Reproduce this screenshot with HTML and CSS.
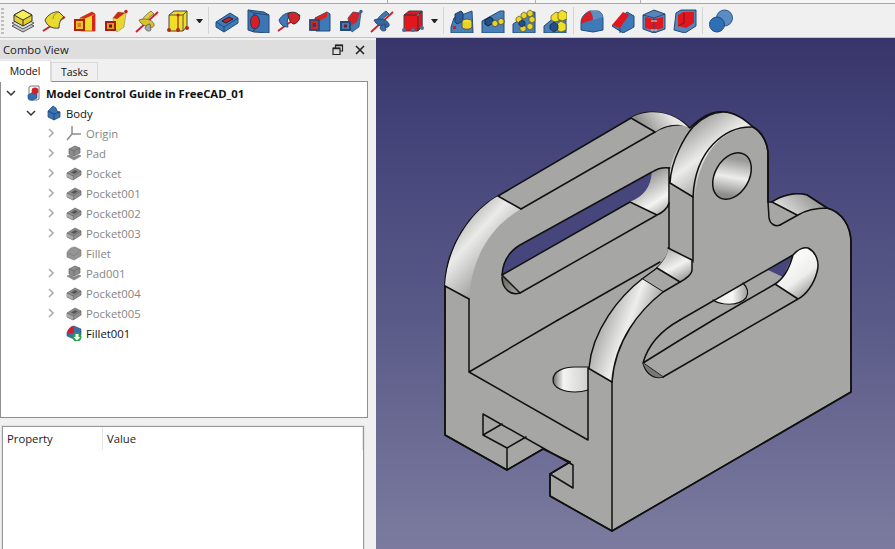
FILE: index.html
```html
<!DOCTYPE html>
<html lang="en">
<head>
<meta charset="utf-8">
<title>FreeCAD</title>
<link rel="stylesheet" href="styles.css">
</head>
<body>
<svg class="defs" width="0" height="0">
  <defs>
    <symbol id="gray-pocket" viewBox="0 0 16 16">
      <path d="M1 8 9 3l6 3v4l-8 5-6-3z" fill="#8e8e8e" stroke="#666" stroke-width=".7"/>
      <path d="M1 8l6 3 8-5" fill="none" stroke="#666" stroke-width=".7"/>
      <path d="M7 11v4" stroke="#666" stroke-width=".7"/>
      <path d="M5 7.500 9 5l3 1.500-4 2.500z" fill="#555"/>
      <path d="M1 8.500l6 3v3.300l-6-3z" fill="#a8a8a8"/>
    </symbol>
    <symbol id="gray-pad" viewBox="0 0 16 16">
      <path d="M3 4 9 1l5 2v5l-6 3-5-2z" fill="#8c8c8c" stroke="#666" stroke-width=".7"/>
      <path d="M3 4l5 2 6-3M8 6v5" fill="none" stroke="#666" stroke-width=".7"/>
      <path d="M1 11l3-1 4 2 5-2 2 1-7 4z" fill="#8a8a8a" stroke="#777" stroke-width=".6"/>
    </symbol>
  </defs>
</svg>

<div class="top-strip">
  <span class="tick tick-a"></span><span class="tick tick-b"></span><span class="tick tick-c"></span>
</div>

<header class="toolbar">
  <span class="grip"></span>
  <span class="tool"><svg viewBox="0 0 24 24"><path d="M1 17l11-6 11 6-11 6z" fill="#c9c9c9" stroke="#555"/><path d="M1 14l11-6 11 6-11 6z" fill="#ddd" stroke="#555"/><path d="M3 6l9-5 9 5v6l-9 5-9-5z" fill="#e2cf2a" stroke="#333"/><path d="M3 6l9 5 9-5-9-5z" fill="#f6ee5a" stroke="#333"/><path d="M12 11v6" stroke="#333"/></svg></span>
  <span class="tool"><svg viewBox="0 0 24 24"><path d="M1 22 23 8" stroke="#c8202a" stroke-width="2"/><path d="M3 11C6 5 13 2 17 3l5 5c-3 1-5 6-5 11-7 1-12-2-14-8z" fill="#e9da2f" stroke="#444"/><path d="M17 3c-4 1-6 4-6 7" fill="none" stroke="#998f10"/></svg></span>
  <span class="tool"><svg viewBox="0 0 24 24"><path d="M7 9 19 3l3 2v17H8z" fill="#f0dc2c" stroke="#a42" stroke-width=".8"/><path d="M7 9 19 3l3 2L11 10z" fill="#d8261e"/><path d="M22 5v17h-3V7z" fill="#d8261e"/><rect x="2" y="11" width="9" height="10" fill="#e8c52a" stroke="#b31d14" stroke-width="2"/><rect x="4.500" y="14" width="3.500" height="4" fill="#e27a1c"/></svg></span>
  <span class="tool"><svg viewBox="0 0 24 24"><path d="M9 9l5-6 8 1-2 14-7 5-3-6z" fill="#e9d52f" stroke="#996" stroke-width=".7"/><path d="M9 9l5-6 7 1-8 6z" fill="#c8281e"/><rect x="2" y="13" width="9" height="8" fill="#d8a020" stroke="#a81a14" stroke-width="2"/><rect x="5" y="15.500" width="3" height="3" fill="#611"/><circle cx="22" cy="2.500" r="1.700" fill="#b52018"/></svg></span>
  <span class="tool"><svg viewBox="0 0 24 24"><path d="M1 23 23 3" stroke="#c8202a" stroke-width="1.800"/><path d="M6 13C8 8 12 5 16 2l3 3c-4 2-7 5-8 8z" fill="#e5d02c" stroke="#665" stroke-width=".8"/><path d="M4 11c5-2 13-1 15 4 1 3-2 4-5 3-3-1-8-2-10-7z" fill="#d8c428" stroke="#665" stroke-width=".8"/><path d="M10 19c1-3 3-4 5-4l1 6c-2 2-5 1-6-2z" fill="#a9a9a4" stroke="#555" stroke-width=".8"/></svg></span>
  <span class="tool"><svg viewBox="0 0 24 24"><path d="M3 6 8 2h13v15l-4 5H3z" fill="#f0df24" stroke="#444"/><path d="M3 6h14v16M17 6l4-4" fill="none" stroke="#555"/><path d="M12 6v15" stroke="#b22a1c" stroke-width="1.300"/><g fill="#b22a1c"><circle cx="3" cy="21" r="2"/><circle cx="12" cy="21" r="2"/><circle cx="21" cy="19" r="2"/><circle cx="12" cy="6" r="1.500"/></g></svg></span>
  <span class="drop"></span>
  <span class="sep"></span>
  <span class="tool"><svg viewBox="0 0 24 24"><path d="M1 13 15 4l8 5v5L9 23l-8-5z" fill="#3f7ab8" stroke="#234a78"/><path d="M1 13l8 5 14-9M9 18v5" fill="none" stroke="#234a78"/><path d="M7 12l7-4 4 2-7 4z" fill="#c8202a" stroke="#223"/></svg></span>
  <span class="tool"><svg viewBox="0 0 24 24"><path d="M2 1 18 3l5 3v18L8 23l-6-2z" fill="#3c75b3" stroke="#234a78"/><path d="M2 1l6 3 15 2M8 4v19" fill="none" stroke="#234a78"/><ellipse cx="9" cy="13" rx="4.500" ry="7" fill="#d81e24" stroke="#1b3a60"/></svg></span>
  <span class="tool"><svg viewBox="0 0 24 24"><path d="M1 22 23 6" stroke="#c8202a" stroke-width="1.800"/><path d="M2 11C5 6 10 3 14 4l-3 5c-1 3-1 5 0 9C6 18 3 15 2 11z" fill="#3f7ab8" stroke="#234a78"/><path d="M11 5c2-3 9-2 11 1 2 3-1 8-5 9-3 0-6-6-6-10z" fill="#d4242a" stroke="#233"/></svg></span>
  <span class="tool"><svg viewBox="0 0 24 24"><path d="M7 9 19 3l3 2v17H8z" fill="#3f7ab8" stroke="#234a78"/><path d="M7 9 19 3v5L11 12z" fill="#d8261e"/><rect x="2" y="11" width="9" height="10" fill="#d8261e" stroke="#234a78" stroke-width="1.800"/><rect x="4.500" y="14" width="3.500" height="4" fill="#5a2a60"/></svg></span>
  <span class="tool"><svg viewBox="0 0 24 24"><path d="M9 9l5-6 8 1-2 14-7 5-3-6z" fill="#4179b5" stroke="#234a78" stroke-width=".7"/><path d="M9 9l5-6 7 1-3 9-7 4z" fill="#d0262a"/><rect x="2" y="13" width="9" height="8" fill="#4a7ab0" stroke="#234a78" stroke-width="2"/><rect x="5" y="15.500" width="3" height="3" fill="#7a1a28"/><circle cx="22" cy="2.500" r="1.700" fill="#345f90"/></svg></span>
  <span class="tool"><svg viewBox="0 0 24 24"><path d="M1 23 23 3" stroke="#c8202a" stroke-width="1.800"/><path d="M6 13C8 8 12 5 16 2l3 3c-4 2-7 5-8 8z" fill="#3f7ab8" stroke="#1f4068" stroke-width=".8"/><path d="M4 11c5-2 13-1 15 4 1 3-2 4-5 3-3-1-8-2-10-7z" fill="#35689f" stroke="#1f4068" stroke-width=".8"/><path d="M10 19c1-3 3-4 5-4l1 6c-2 2-5 1-6-2z" fill="#3a6ca5" stroke="#1f4068" stroke-width=".8"/></svg></span>
  <span class="tool"><svg viewBox="0 0 24 24"><path d="M3 6 8 2h13v15l-4 5H3z" fill="#e2161c" stroke="#444"/><path d="M3 6h14v16M17 6l4-4" fill="none" stroke="#333"/><path d="M17 22 21 17V2" fill="none" stroke="#446"/><g fill="#4b6f9b"><circle cx="3" cy="21" r="2"/><circle cx="12" cy="21" r="2"/><circle cx="21" cy="19" r="2"/><circle cx="17" cy="6" r="1.200"/></g></svg></span>
  <span class="drop"></span>
  <span class="sep"></span>
  <span class="tool"><svg viewBox="0 0 24 24"><path d="M1 18 4 9l18-7 1 22H1z" fill="#4a7fb8" stroke="#234a78"/><path d="M5 5l6-3 2 2v8l-6 3-2-2z" fill="#2f5f98" stroke="#1b3a60"/><ellipse cx="17" cy="13" rx="5" ry="3" fill="#f0e038" stroke="#555"/><path d="M12 13v5c1 3 9 3 10 0v-5" fill="#e8d428" stroke="#555"/><rect x="3" y="17" width="3" height="3" fill="#c8202a"/></svg></span>
  <span class="tool"><svg viewBox="0 0 24 24"><path d="M1 12 19 2h4v22H1z" fill="#4a7fb8" stroke="#234a78"/><path d="M4 11l5-3 3 2v4l-5 3-3-2z" fill="#1f4f88" stroke="#123"/><path d="M11 13l3-2 3 2v3l-3 2-3-2z" fill="#e8d428" stroke="#555"/><path d="M17 11l3-2 3 2v3l-3 2-3-2z" fill="#e8d428" stroke="#555"/></svg></span>
  <span class="tool"><svg viewBox="0 0 24 24"><path d="M1 15 20 3h3v21H1z" fill="#4a7fb8" stroke="#234a78"/><g fill="#e8d428" stroke="#5a5220" stroke-width=".7"><path d="M4 9l3-2 3 2v3l-3 2-3-2z"/><path d="M9 5l3-2 3 2v3l-3 2-3-2z"/><path d="M15 3l3-2 3 2v3l-3 2-3-2z"/><path d="M17 9l3-2 3 2v3l-3 2-3-2z"/><path d="M15 16l3-2 3 2v3l-3 2-3-2z"/><path d="M8 18l3-2 3 2v3l-3 2-3-2z"/></g><path d="M7 13l3-2 3 2v3l-3 2-3-2z" fill="#234f88" stroke="#123" stroke-width=".7"/></svg></span>
  <span class="tool"><svg viewBox="0 0 24 24"><path d="M1 17 18 3h5v21H1z" fill="#4a7fb8" stroke="#234a78"/><g fill="#f0df28" stroke="#5a5220" stroke-width=".7"><path d="M8 7l5-4 6 2-1 6-6 2-4-2z"/><path d="M15 4l4-3 5 3v6l-5 2-4-2z"/><path d="M14 15l4-3 5 3v6l-5 2-4-2z"/></g><path d="M7 16l4-3 4 3v4l-4 3-4-3z" fill="#234f88" stroke="#123" stroke-width=".7"/></svg></span>
  <span class="sep"></span>
  <span class="tool"><svg viewBox="0 0 24 24"><path d="M1 21V14C1 8 5 4 10 2h7c4 0 6 4 6 8v11l-10 2z" fill="#3f7ab8" stroke="#234a78"/><path d="M1 13C2 8 6 4 10 2c2 3 3 5 3 9C8 12 4 13 1 15z" fill="#d81e24"/><path d="M13 11C13 6 12 4 10 2h7c3 0 5 3 6 6z" fill="#5f8fc2"/></svg></span>
  <span class="tool"><svg viewBox="0 0 24 24"><path d="M1 17 16 3l7 4v11l-11 6z" fill="#3f7ab8" stroke="#234a78"/><path d="M1 16 12 3l6 3-9 13z" fill="#e0181e"/><path d="M9 19v5" stroke="#234a78"/></svg></span>
  <span class="tool"><svg viewBox="0 0 24 24"><path d="M1 6 12 1l11 4v15l-11 4-11-4z" fill="#5585b8" stroke="#234a78"/><path d="M3 8l9 2v11l-9-2z" fill="#e0181e"/><path d="M21 8l-9 2v11l9-2z" fill="#e0181e"/><path d="M1 6l11 3 11-4M12 9v15" fill="none" stroke="#234a78"/><path d="M9 12h6M9 21h6" stroke="#ddd" stroke-width="1"/></svg></span>
  <span class="tool"><svg viewBox="0 0 24 24"><path d="M3 4 8 1h15v16l-11 7-11-3z" fill="#5585b8" stroke="#234a78"/><path d="M5 6 10 3h11v11l-8 5-8-2z" fill="#e0181e"/><path d="M11 4v10l-6 3" fill="none" stroke="#801018"/></svg></span>
  <span class="sep"></span>
  <span class="tool"><svg viewBox="0 0 24 24"><circle cx="15.500" cy="9" r="8" fill="#5a8dc2" stroke="#2c5a8a"/><circle cx="8" cy="15.500" r="7.500" fill="#2f6fb5" stroke="#204a78"/></svg></span>
</header>

<main class="workspace">
  <aside class="dock">
    <div class="dock-title">
      <span class="dock-name">Combo View</span>
      <svg class="dock-btn" viewBox="0 0 12 12"><path d="M3.500 3.500V1h7v6H8M1 4h7v6.500H1z" fill="none" stroke="#222" stroke-width="1.200"/><path d="M1 4.500h7M3.500 1.500h7" stroke="#222" stroke-width="1.400"/></svg>
      <svg class="dock-btn" viewBox="0 0 12 12"><path d="M2 2l8 8M10 2l-8 8" stroke="#222" stroke-width="1.600"/></svg>
    </div>
    <div class="tabs">
      <span class="tab tab-active">Model</span>
      <span class="tab">Tasks</span>
    </div>
    <div class="tree">
      <div class="row lvl0 strong"><svg class="chev" viewBox="0 0 10 10"><path d="M1 3l4 4 4-4" class="chev-open"/></svg>
        <svg class="ticon" viewBox="0 0 16 16"><path d="M3 2l2-1h8v13l-2 1H3z" fill="#fff" stroke="#777"/><path d="M2 10l5-3 4 2v4l-5 2.500-4-2z" fill="#2f6fb5" stroke="#1d3f6a" stroke-width=".6"/><circle cx="9" cy="6" r="3.400" fill="#d3202a"/></svg>
        Model Control Guide in FreeCAD_01</div>
      <div class="row lvl1"><svg class="chev" viewBox="0 0 10 10"><path d="M1 3l4 4 4-4" class="chev-open"/></svg>
        <svg class="ticon" viewBox="0 0 16 16"><path d="M2 6 7 1l3 2 1 3 3 1v5l-6 3-6-3z" fill="#3873b3" stroke="#1d3f6a" stroke-width=".7"/><path d="M2 6l6 3v6M8 9l6-2" fill="none" stroke="#173a63" stroke-width=".7"/></svg>
        Body</div>
      <div class="row lvl2 dim"><svg class="chev" viewBox="0 0 10 10"><path d="M3 1l4 4-4 4" class="chev-closed"/></svg>
        <svg class="ticon" viewBox="0 0 16 16"><path d="M6 1v8M6 9l9 0M6 9l-5 6" fill="none" stroke="#8d8d8d" stroke-width="1.500"/></svg>
        Origin</div>
      <div class="row lvl2 dim"><svg class="chev" viewBox="0 0 10 10"><path d="M3 1l4 4-4 4" class="chev-closed"/></svg><svg class="ticon"><use href="#gray-pad"/></svg>Pad</div>
      <div class="row lvl2 dim"><svg class="chev" viewBox="0 0 10 10"><path d="M3 1l4 4-4 4" class="chev-closed"/></svg><svg class="ticon"><use href="#gray-pocket"/></svg>Pocket</div>
      <div class="row lvl2 dim"><svg class="chev" viewBox="0 0 10 10"><path d="M3 1l4 4-4 4" class="chev-closed"/></svg><svg class="ticon"><use href="#gray-pocket"/></svg>Pocket001</div>
      <div class="row lvl2 dim"><svg class="chev" viewBox="0 0 10 10"><path d="M3 1l4 4-4 4" class="chev-closed"/></svg><svg class="ticon"><use href="#gray-pocket"/></svg>Pocket002</div>
      <div class="row lvl2 dim"><svg class="chev" viewBox="0 0 10 10"><path d="M3 1l4 4-4 4" class="chev-closed"/></svg><svg class="ticon"><use href="#gray-pocket"/></svg>Pocket003</div>
      <div class="row lvl2 dim"><span class="chev"></span><svg class="ticon" viewBox="0 0 16 16"><path d="M1 8C2 4 6 2 9 2l6 3v6l-7 4-7-3z" fill="#959595" stroke="#777" stroke-width=".6"/><path d="M1 8l7 3 7-6" fill="none" stroke="#777" stroke-width=".6"/></svg>Fillet</div>
      <div class="row lvl2 dim"><svg class="chev" viewBox="0 0 10 10"><path d="M3 1l4 4-4 4" class="chev-closed"/></svg><svg class="ticon"><use href="#gray-pad"/></svg>Pad001</div>
      <div class="row lvl2 dim"><svg class="chev" viewBox="0 0 10 10"><path d="M3 1l4 4-4 4" class="chev-closed"/></svg><svg class="ticon"><use href="#gray-pocket"/></svg>Pocket004</div>
      <div class="row lvl2 dim"><svg class="chev" viewBox="0 0 10 10"><path d="M3 1l4 4-4 4" class="chev-closed"/></svg><svg class="ticon"><use href="#gray-pocket"/></svg>Pocket005</div>
      <div class="row lvl2"><span class="chev"></span><svg class="ticon" viewBox="0 0 16 16"><path d="M1 8C2 4 5 1 8 1l7 3v6l-7 4-7-3z" fill="#3a6fa8" stroke="#234a78" stroke-width=".6"/><path d="M1 9C2 5 4 2 7 1c1 3 1 5 1 7z" fill="#d81e24"/><circle cx="11" cy="12" r="4.500" fill="#1fa838"/><path d="M9.500 9h3v3h2L11 15.500 7.500 12h2z" fill="#fff"/></svg>Fillet001</div>
    </div>
    <div class="props">
      <div class="props-head">
        <span class="col-prop">Property</span>
        <span class="col-value">Value</span>
      </div>
    </div>
  </aside>

  <section class="view">
    <svg class="model" viewBox="376 38 519 511" preserveAspectRatio="none">
      <defs>
        <linearGradient id="arcL" gradientUnits="userSpaceOnUse" x1="450" y1="215" x2="510" y2="270">
          <stop offset="0" stop-color="#9c9c9a"/><stop offset=".4" stop-color="#ebebe9"/><stop offset="1" stop-color="#8d8d8b"/>
        </linearGradient>
        <linearGradient id="arcT" gradientUnits="userSpaceOnUse" x1="680" y1="130" x2="725" y2="190">
          <stop offset="0" stop-color="#9c9c9a"/><stop offset=".45" stop-color="#ecece9"/><stop offset="1" stop-color="#8e8e8c"/>
        </linearGradient>
        <linearGradient id="arcBack" gradientUnits="userSpaceOnUse" x1="640" y1="125" x2="665" y2="108">
          <stop offset="0" stop-color="#8e8e8c"/><stop offset="1" stop-color="#e6e6e4"/>
        </linearGradient>
        <linearGradient id="arcF" gradientUnits="userSpaceOnUse" x1="595" y1="330" x2="650" y2="350">
          <stop offset="0" stop-color="#a5a5a3"/><stop offset=".5" stop-color="#eeeeec"/><stop offset="1" stop-color="#8f8f8d"/>
        </linearGradient>
        <linearGradient id="slotWall" gradientUnits="userSpaceOnUse" x1="650" y1="175" x2="675" y2="215">
          <stop offset="0" stop-color="#9a9a98"/><stop offset=".55" stop-color="#f4f4f2"/><stop offset="1" stop-color="#8a8a88"/>
        </linearGradient>
        <linearGradient id="slotWall2" gradientUnits="userSpaceOnUse" x1="785" y1="255" x2="815" y2="295">
          <stop offset="0" stop-color="#ffffff"/><stop offset=".55" stop-color="#eeeeec"/><stop offset="1" stop-color="#8a8a88"/>
        </linearGradient>
        <linearGradient id="holeWall" gradientUnits="userSpaceOnUse" x1="725" y1="160" x2="738" y2="195">
          <stop offset="0" stop-color="#9a9a98"/><stop offset=".5" stop-color="#ededeb"/><stop offset="1" stop-color="#8c8c8a"/>
        </linearGradient>
        <linearGradient id="backHole" gradientUnits="userSpaceOnUse" x1="713" y1="0" x2="748" y2="0">
          <stop offset="0" stop-color="#e6e6e4"/><stop offset=".55" stop-color="#f8f8f6"/><stop offset="1" stop-color="#9a9a98"/>
        </linearGradient>
        <linearGradient id="holeLow" gradientUnits="userSpaceOnUse" x1="553" y1="0" x2="588" y2="0">
          <stop offset="0" stop-color="#666664"/><stop offset=".12" stop-color="#a5a5a3"/><stop offset=".3" stop-color="#f4f4f2"/><stop offset="1" stop-color="#cfcfcd"/>
        </linearGradient>
        <linearGradient id="corner" gradientUnits="userSpaceOnUse" x1="668" y1="250" x2="685" y2="282">
          <stop offset="0" stop-color="#b5b5b3"/><stop offset=".5" stop-color="#f2f2f0"/><stop offset="1" stop-color="#8f8f8d"/>
        </linearGradient>
        <linearGradient id="arcR" gradientUnits="userSpaceOnUse" x1="790" y1="215" x2="815" y2="190">
          <stop offset="0" stop-color="#d8d8d6"/><stop offset="1" stop-color="#8d8d8b"/>
        </linearGradient>
        <linearGradient id="crescent" gradientUnits="userSpaceOnUse" x1="502" y1="280" x2="520" y2="296">
          <stop offset="0" stop-color="#666664"/><stop offset="1" stop-color="#b0b0ae"/>
        </linearGradient>
      </defs>

      <!-- body silhouette -->
      <path class="face" d="M445 435V283C447 246 470 212 498 196L631 118C642 111 668 107 690 128C700 118 712 111 723 112C735 112 745 120 753 127C762 132 768 143 768 155V202L772 202C782 195 796 192 807 195L827 208C842 212 851 226 851 243V392L612 531 550 496V474L570 462 543 449 507 470Z"/>

      <!-- back plate: rim and slot -->
      <path class="wall-l" d="M445 286C447 248 470 212 498 196L521 209C492 226 472 255 469 299Z"/>
      <path class="line" d="M445 286 469 299M498 196 521 209"/>
      <path class="line" d="M521 209 655 132C664 126 674 124 685 125"/>
      <path class="wall-b" d="M631 118C642 111 668 107 688 127L680 125C670 124 662 127 655 132Z"/>
      <path class="line" d="M631 118 655 132"/>

      <path class="sky" d="M502 275C503 260 510 251 520 245L652 172C651 186 645 196 630 202Z"/>
      <path class="wall-s" d="M652 172C658 168 664 167 670 168V203C668 208 662 213 657 215L630 202C645 196 651 186 652 172Z"/>
      <path class="wall-c" d="M502 275 520 293C511 296 502 289 502 275Z"/>
      <path class="line" d="M502 275 630 202 657 215M502 275C503 260 510 251 520 245L652 172C658 168 664 167 670 168M502 277C502 289 511 296 520 293L657 215C662 213 668 208 669 203"/>
      <path class="line" d="M502 275 520 293"/>

      <!-- middle tab -->
      <path class="wall-t" d="M670 172C672 150 690 128 693 127C702 118 712 112 723 112C735 112 745 120 753 127C728 128 700 145 695 197L670 183Z"/>
      <path class="line" d="M670 183 693 197M693 197C695 150 725 126 753 127C762 132 768 143 768 155V202L769 218C770 224 775 227 780 225"/>
      <path class="line" d="M669 168V248C669 254 664 262 657 268M670 183C671 160 685 136 693 127C702 118 712 112 723 112C735 112 745 120 753 127"/>
      <path class="line" d="M693 197V262"/>
      <ellipse class="hole" cx="732" cy="176" rx="17" ry="25" transform="rotate(30 732 176)"/>
      <path class="corner" d="M668 248 692 260V270L680 282 657 268C663 262 668 255 668 248Z"/>
      <path class="line" d="M668 248 692 260M692 260V270C692 274 686 279 680 282M657 268 680 282M558 320 660 262"/>
      <path class="line" d="M642 279 663 292 680 282M642 279 657 268"/>

      <!-- rear rim behind tab -->
      <path class="wall-r" d="M772 202C782 195 796 192 807 195L827 208C816 208 806 211 797 215Z"/>
      <path class="line" d="M772 202 797 215M772 202C782 195 796 192 807 195L827 208"/>

      <!-- front plate rim -->
      <path class="wall-f" d="M642 279C622 296 605 316 596 336 590 348 589 360 588 368L612 382C613 362 620 330 663 292Z"/>
      <path class="line" d="M642 279C620 296 592 330 589 368M663 292C640 310 615 340 612 382"/>
      <path class="line" d="M588 368 612 382"/>

      <!-- front face outline -->
      <path class="line" d="M780 225 798 215C808 209 818 208 827 208 842 212 851 226 851 243V392L612 531"/>
      <path class="line" d="M612 382V531"/>

      <!-- front slot -->
      <path class="sky" d="M768 270 793 255 783 277Z"/>
      <path class="wall-s2" d="M793 255C798 249 804 247 808 248 816 252 820 262 817 272 814 284 806 295 798 299L775 284C785 278 790 266 793 255Z"/>
      <path class="back-hole" d="M713 300 743 283 748 292C746 300 738 305 730 305 722 305 716 303 713 300Z"/>
      <path class="line" d="M680 320 793 255C798 249 804 247 808 248 816 252 820 262 817 272 814 284 806 295 798 299L663 377M713 320 775 284 798 299M775 284C785 278 790 266 793 255"/>
      <path class="line" d="M680 320C662 330 648 345 643 363 646 373 652 379 663 377M643 363 680 340 713 320M643 363 663 377"/>
      <path class="line thin" d="M713 300C720 305 738 307 746 298 749 293 748 288 743 283"/>
      <path class="wall-d" d="M643 363 663 377C655 379 647 374 643 363Z"/>

      <!-- inner floor, hole, left face -->
      <path class="hole-low" d="M588 367H575C564 367 553 371 553 380 553 388 564 392 575 392 580 392 585 391 588 390Z"/>
      <path class="line thin" d="M588 367H575C564 367 553 371 553 380 553 388 564 392 575 392 580 392 585 391 588 390"/>
      <path class="line" d="M469 299V372L588 440V368M469 372 558 320"/>

      <!-- bottom slots -->
      <path class="line" d="M445 286V435L507 470 543 449M507 470V448L483 435V414L573 465V488L550 474V496L612 531M483 435 502 424M507 448 526 437M550 474 570 462"/>
    </svg>
  </section>
</main>
</body>
</html>
```

FILE: styles.css
```css
* { box-sizing: border-box; }

html, body {
  margin: 0;
  width: 895px;
  height: 549px;
  overflow: hidden;
  background: #f0f0f0;
  font-family: "Open Sans", "Noto Sans", "Liberation Sans", sans-serif;
  font-size: 11.300px;
  color: #111;
}

body { display: flex; flex-direction: column; }

.defs { display: block; height: 0; }

.top-strip {
  height: 4px;
  flex: none;
  background: #f6f6f6;
  border-bottom: 1px solid #a8a8a8;
  display: flex;
}
.tick { width: 1px; height: 3px; background: #b0b0b0; }
.tick-a { margin-left: 387px; }
.tick-b { margin-left: 147px; }
.tick-c { margin-left: 104px; }

.toolbar {
  height: 34px;
  flex: none;
  display: flex;
  align-items: center;
  background: #f0f0f0;
  padding-left: 1px;
  border-bottom: 1px solid #c4c4c4;
}
.grip {
  width: 3px;
  height: 26px;
  margin-right: 3.500px;
  background: repeating-linear-gradient(to bottom, #bdbdbd 0 2px, transparent 2px 4px);
}
.tool {
  width: 31px;
  height: 24px;
  display: flex;
  justify-content: center;
}
.tool svg { width: 24px; height: 24px; display: block; }
.drop {
  width: 7px;
  height: 4px;
  margin: 0 3.500px 0 2px;
  border-left: 3.500px solid transparent;
  border-right: 3.500px solid transparent;
  border-top: 4px solid #222;
}
.sep {
  width: 1px;
  height: 27px;
  margin: 0 2.500px 0 2px;
  background: #d4d4d4;
}

.workspace {
  flex: 1;
  min-height: 0;
  display: flex;
}

.dock {
  width: 376px;
  flex: none;
  display: flex;
  flex-direction: column;
  background: #f0f0f0;
}
.dock-title {
  height: 19px;
  margin-top: 2px;
  padding: 0 10px 0 3px;
  display: flex;
  align-items: center;
  gap: 10px;
  background: #dedede;
  font-size: 11.300px;
}
.dock-name { flex: 1; color: #222; }
.dock-btn { width: 12px; height: 12px; }

.tabs {
  height: 23px;
  display: flex;
  align-items: flex-end;
  position: relative;
  z-index: 1;
  margin-bottom: -1px;
}
.tab {
  height: 20px;
  width: 47px;
  display: flex;
  align-items: center;
  justify-content: center;
  padding-bottom: 1px;
  background: #f0f0f0;
  border: 1px solid #d9d9d9;
  border-bottom: 1px solid #8e8e8e;
  font-size: 10.500px;
}
.tab-active {
  width: 51px;
  height: 22px;
  background: #fff;
  border-bottom-color: #fff;
  border-left: 0;
  border-top-color: #e4e4e4;
}

.tree {
  width: 368px;
  height: 337px;
  flex: none;
  padding-top: 1px;
  background: #fff;
  border: 1px solid #8e8e8e;
}
.row {
  height: 20px;
  display: flex;
  align-items: center;
  white-space: nowrap;
  color: #111;
}
.strong { font-weight: 700; }
.dim { color: #858585; }
.lvl0 { padding-left: 5px; }
.lvl1 { padding-left: 25px; }
.lvl2 { padding-left: 45px; }
.chev { width: 10px; height: 10px; margin-right: 10px; flex: none; }
.chev-open { fill: none; stroke: #333; stroke-width: 1.500; }
.chev-closed { fill: none; stroke: #a8a8a8; stroke-width: 1.500; }
.ticon { width: 16px; height: 16px; margin-right: 4px; flex: none; }

.props {
  width: 362px;
  margin: 8px 0 0 2px;
  flex: 1;
  min-height: 0;
  background: #fff;
  border: 1px solid #999;
  border-bottom: 0;
  box-shadow: 0 0 0 1px #e2e2e2;
}
.props-head {
  height: 23px;
  display: flex;
  color: #222;
}
.col-prop {
  width: 100px;
  padding: 4px 0 0 4px;
  border-right: 1px solid #e6e6e6;
}
.col-value {
  flex: 1;
  padding: 4px 0 0 4px;
  border-right: 1px solid #e6e6e6;
}

.view {
  flex: 1;
  min-width: 0;
  background: linear-gradient(to bottom, #37356a 0%, #45447a 20%, #5a5a88 55%, #7c7b9f 100%);
}
.model { display: block; width: 100%; height: 100%; }

.face { fill: #a6a6a4; stroke: #111; stroke-width: 1.600; stroke-linejoin: round; }
.line { fill: none; stroke: #111; stroke-width: 1.500; stroke-linejoin: round; stroke-linecap: round; }
.thin { stroke-width: 1.200; }
.sky { fill: #47467c; stroke: none; }
.wall-l { fill: url(#arcL); }
.wall-b { fill: url(#arcBack); }
.wall-t { fill: url(#arcT); }
.wall-s { fill: url(#slotWall); }
.wall-s2 { fill: url(#slotWall2); }
.wall-f { fill: url(#arcF); }
.wall-r { fill: url(#arcR); }
.wall-c { fill: url(#crescent); }
.wall-d { fill: #777; }
.back-hole { fill: url(#backHole); }
.corner { fill: url(#corner); }
.hole { fill: url(#holeWall); stroke: #111; stroke-width: 1.500; }
.hole-low { fill: url(#holeLow); }
```
